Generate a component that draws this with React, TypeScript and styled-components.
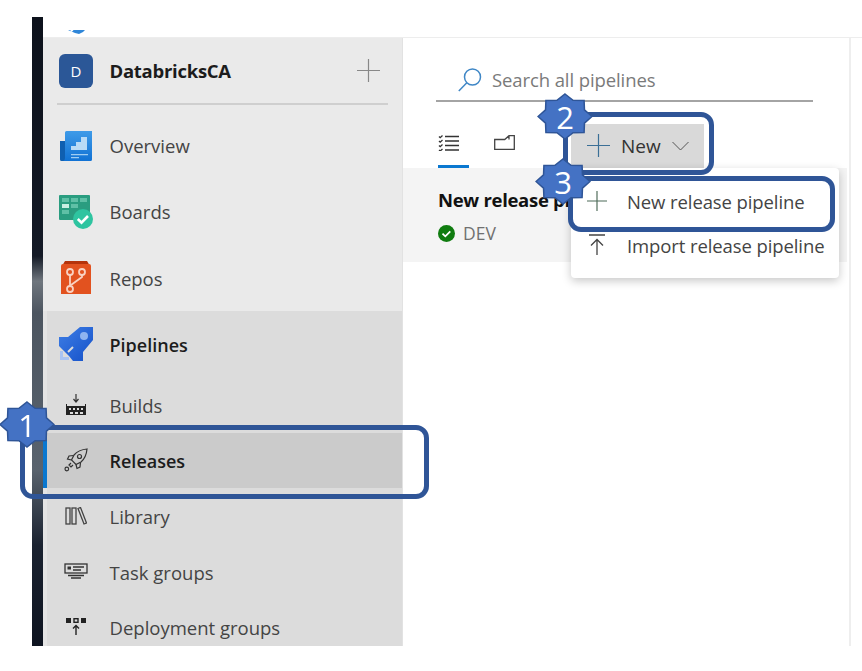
import * as React from 'react';
import styled, { createGlobalStyle } from 'styled-components';

const GlobalStyle = createGlobalStyle`
  html, body {
    margin: 0;
    padding: 0;
    background: #fff;
    font-family: "Open Sans", "Noto Sans", sans-serif;
  }
`;

const Page = styled.div`
  position: relative;
  width: 862px;
  height: 671px;
  overflow: hidden;
  padding: 17px 0 25px 32px;
  box-sizing: border-box;
  filter: blur(0.45px);
`;

const Shot = styled.div`
  display: flex;
  height: 629px;
  overflow: hidden;
`;

const Wallpaper = styled.div`
  width: 11px;
  flex: none;
  background: linear-gradient(
    180deg,
    #0d121c 0,
    #141a26 38%,
    #6f767e 42%,
    #4c5560 47%,
    #59636e 72%,
    #1a2230 84%,
    #0e1420 100%
  );
`;

const Window = styled.div`
  flex: 1;
  display: flex;
  flex-direction: column;
  min-width: 0;
`;

const TopBar = styled.div`
  height: 21px;
  flex: none;
  padding-left: 25px;
  border-bottom: 1px solid #ededed;
  box-sizing: border-box;
  overflow: hidden;
`;

const Body = styled.div`
  flex: 1;
  display: flex;
  min-height: 0;
`;

const Sidebar = styled.nav`
  width: 360px;
  flex: none;
  background: #eaeaea;
  border-right: 1px solid #e2e2e2;
  box-sizing: border-box;
  overflow: hidden;
`;

const ProjectHeader = styled.div`
  height: 67px;
  margin: 0 14px 8px 14px;
  padding: 0 8px 0 2px;
  display: flex;
  align-items: center;
  gap: 16.5px;
  border-bottom: 2px solid #cfcfcf;
  box-sizing: border-box;
`;

const Avatar = styled.div`
  width: 34px;
  height: 34px;
  border-radius: 6px;
  background: #2b5797;
  color: #fff;
  font-size: 15px;
  display: flex;
  align-items: center;
  justify-content: center;
`;

const ProjectName = styled.div`
  flex: 1;
  font-size: 18.5px;
  font-weight: 700;
  color: #1c1c1c;
  letter-spacing: -0.27px;
`;

const NavRow = styled.div<{ $selected?: boolean; $small?: boolean; $bold?: boolean }>`
  height: ${(p) => (p.$small ? '55.5px' : '66px')};
  display: flex;
  align-items: center;
  gap: 16.5px;
  padding-left: ${(p) => (p.$selected ? '12px' : '16px')};
  border-left: ${(p) => (p.$selected ? '4px solid #0a78d0' : 'none')};
  background: ${(p) => (p.$selected ? '#cbcbcb' : 'transparent')};
  font-size: ${(p) => (p.$bold ? '18px' : '18.5px')};
  font-weight: ${(p) => (p.$bold ? 600 : 400)};
  color: ${(p) => (p.$bold ? '#1c1c1c' : '#444')};
`;

const NavLabel = styled.span<{ $nudge?: 'up' | 'down' }>`
  padding-top: ${(p) => (p.$nudge === 'down' ? '2px' : '0')};
  padding-bottom: ${(p) => (p.$nudge === 'up' ? '2px' : '0')};
`;

const PipelinesGroup = styled.div`
  background: #dcdcdc;
  box-shadow: inset 4px 0 0 #e4e4e4;
`;

const IconSlot = styled.span`
  width: 34px;
  height: 34px;
  flex: none;
  display: flex;
  align-items: center;
  justify-content: center;
`;

const Main = styled.main`
  flex: 1;
  position: relative;
  min-width: 0;
  margin-right: 11px;
  border-right: 2px solid #eeeeee;
  background: #fff;
`;

const SearchBar = styled.div`
  margin: 0 36px 0 33px;
  height: 64px;
  padding: 0 0 8px 22px;
  display: flex;
  align-items: flex-end;
  gap: 10px;
  border-bottom: 2px solid #a4a4a4;
  box-sizing: border-box;
  color: #7a7a7a;
  font-size: 18.5px;
  letter-spacing: -0.1px;
`;

const Toolbar = styled.div`
  height: 66px;
  padding-left: 35px;
  display: flex;
  align-items: center;
  box-sizing: border-box;
`;

const Tab = styled.div<{ $active?: boolean }>`
  width: 31px;
  height: 46px;
  margin: 20px 25px 0 0;
  box-sizing: border-box;
  border-bottom: 3px solid ${(p) => (p.$active ? '#0a78d0' : 'transparent')};
  display: flex;
  padding-top: 13px;
`;

const NewButton = styled.div`
  width: 133px;
  height: 44px;
  margin: 21px 0 0 21px;
  padding-left: 16px;
  background: #d9d9d9;
  display: flex;
  align-items: center;
  box-sizing: border-box;
  font-size: 19px;
  color: #333;
`;

const NewLabel = styled.span`
  margin: 0 11px 0 11px;
`;

const ReleaseList = styled.div`
  margin-right: 2px;
  height: 94px;
  padding: 19px 0 0 35px;
  background: #f4f4f4;
  box-sizing: border-box;
`;

const ReleaseName = styled.div`
  font-size: 18.5px;
  font-weight: 700;
  color: #111;
  letter-spacing: -0.3px;
  white-space: nowrap;
`;

const ReleaseStage = styled.div`
  margin-top: 9px;
  display: flex;
  align-items: center;
  gap: 8px;
  font-size: 17.5px;
  color: #707070;
`;

const Menu = styled.div`
  position: absolute;
  left: 168px;
  top: 130px;
  width: 268px;
  height: 110px;
  padding-top: 11px;
  background: #fff;
  border-radius: 4px;
  box-shadow: 0 3px 10px rgba(0, 0, 0, 0.22);
  box-sizing: border-box;
`;

const MenuItem = styled.div`
  height: 44px;
  padding-left: 16px;
  display: flex;
  align-items: center;
  gap: 20px;
  font-size: 18.5px;
  letter-spacing: -0.1px;
  color: #444;
  white-space: nowrap;
`;

const MenuIconSlot = styled.span`
  width: 20px;
  flex: none;
  display: flex;
  justify-content: center;
`;

const Outline = styled.div<{ $x: number; $y: number; $w: number; $h: number }>`
  position: absolute;
  left: ${(p) => p.$x}px;
  top: ${(p) => p.$y}px;
  width: ${(p) => p.$w}px;
  height: ${(p) => p.$h}px;
  border: 5px solid #2f5597;
  border-radius: 13px;
  box-sizing: border-box;
`;

const Badge = styled.div<{ $x: number; $y: number }>`
  position: absolute;
  left: ${(p) => p.$x}px;
  top: ${(p) => p.$y}px;
  width: 56px;
  height: 47px;
  display: flex;
  align-items: center;
  justify-content: center;
  color: #fff;
  font-size: 31px;
  svg {
    position: absolute;
    inset: 0;
  }
  span {
    position: relative;
  }
`;

const starPoints = Array.from({ length: 16 }, (_, i) => {
  const a = (i * Math.PI) / 8 - Math.PI / 2;
  const r = i % 2 === 0 ? 1 : 0.78;
  return `${28 + 27 * r * Math.cos(a)},${23.5 + 22.5 * r * Math.sin(a)}`;
}).join(' ');

function Star({ n, x, y }: { n: number; x: number; y: number }) {
  return (
    <Badge $x={x} $y={y}>
      <svg width="56" height="47" viewBox="0 0 56 47">
        <polygon points={starPoints} fill="#4472c4" stroke="#2f5597" strokeWidth="1.500" />
      </svg>
      <span>{n}</span>
    </Badge>
  );
}

const OverviewIcon = () => (
  <svg width="34" height="32" viewBox="0 0 34 32">
    <defs>
      <linearGradient id="ov" x1="0" y1="0" x2="0" y2="1">
        <stop offset="0" stopColor="#3f9be8" />
        <stop offset="1" stopColor="#1172d4" />
      </linearGradient>
    </defs>
    <path d="M1 11h6v20H2.500A1.500 1.500 0 0 1 1 29.500z" fill="#0f5fb0" />
    <path d="M6 2.500A1.500 1.500 0 0 1 7.500 1H33v28.500a1.500 1.500 0 0 1-1.500 1.500H3.500C5 31 6 30 6 28z" fill="url(#ov)" />
    <path d="M12 16h5v-4h5V7h6v13H12z" fill="#b9dbf6" />
    <path d="M12 24h17v1.200H12zM12 27h8v1.200h-8z" fill="#9fcdf2" />
  </svg>
);

const BoardsIcon = () => (
  <svg width="34" height="34" viewBox="0 0 34 34">
    <rect x="0" y="0" width="31" height="25" rx="1" fill="#2a9d80" />
    <path d="M3 3h7v4H3zM12 3h7v4h-7zM21 3h7v4h-7zM12 9h7v4h-7zM3 15h7v4H3z" fill="#5fc0a6" />
    <path d="M3 9h7v4H3z" fill="#c8efe3" />
    <circle cx="24" cy="24" r="10" fill="#2ec4a0" />
    <path d="M18.800 24l3.700 3.600 6.500-6.600" fill="none" stroke="#fff" strokeWidth="2.600" />
  </svg>
);

const ReposIcon = () => (
  <svg width="32" height="34" viewBox="0 0 32 34">
    <path d="M5 0h22l3 5H2z" fill="#b5330b" />
    <path d="M3 3h26a2 2 0 0 1 2 2v28H1V5a2 2 0 0 1 2-2z" fill="#e2521f" />
    <g fill="none" stroke="#f9d2c2" strokeWidth="1.800">
      <circle cx="10" cy="11" r="3" />
      <circle cx="22" cy="11" r="3" />
      <circle cx="10" cy="28" r="3" />
      <path d="M10 14v11M22 14v2l-11 8" />
    </g>
  </svg>
);

const PipelinesIcon = () => (
  <svg width="34" height="34" viewBox="0 0 34 34">
    <defs>
      <linearGradient id="pl" x1="0" y1="0" x2="1" y2="1">
        <stop offset="0" stopColor="#3f7fe6" />
        <stop offset="1" stopColor="#1450c8" />
      </linearGradient>
    </defs>
    <path d="M0 10h9L21 0h13v13L24 25v9H14l-4-5-5-5-5-5z" fill="url(#pl)" />
    <circle cx="25" cy="9" r="4" fill="#8fb4f0" />
    <path d="M14 20L9 25" stroke="#dcdcdc" strokeWidth="2" />
    <path d="M1 24v9h9v-3H4v-6z" fill="#a9c4f2" />
  </svg>
);

const BuildsIcon = () => (
  <svg width="22" height="22" viewBox="0 0 22 22">
    <path d="M11 0v7M8.500 5l2.500 3 2.500-3" fill="none" stroke="#333" strokeWidth="1.200" />
    <path d="M1 10h1v2h18v-2h1v11H1z" fill="#222" />
    <path d="M4 14h2v2H4zM8 14h2v2H8zM12 14h2v2h-2zM16 14h2v2h-2zM5 18h3v2H5zM10 18h3v2h-3zM15 18h3v2h-3z" fill="#dcdcdc" />
  </svg>
);

const RocketIcon = () => (
  <svg width="24" height="24" viewBox="0 0 24 24" fill="none" stroke="#333" strokeWidth="1.200">
    <path d="M23 1c-6 .5-10 2.500-13 6l-2.500 5 4.500 4.500 5-2.500c3.500-3 5.500-7 6-13z" />
    <circle cx="15.500" cy="8.500" r="2" />
    <path d="M9.500 7.500L5 8 3.500 11l4 1M16.500 14.500L16 19l-3 1.500-1-4" />
    <path d="M7 15l-2 2 2 2 2-2" />
    <circle cx="2.800" cy="21" r="1.800" />
  </svg>
);

const LibraryIcon = () => (
  <svg width="22" height="18" viewBox="0 0 22 18" fill="none" stroke="#444" strokeWidth="1.300">
    <rect x="1" y="1" width="4" height="16" />
    <rect x="7" y="1" width="4" height="16" />
    <path d="M13 1.500l2.500-1 6 15.500-2.500 1z" />
  </svg>
);

const TaskGroupsIcon = () => (
  <svg width="24" height="16" viewBox="0 0 24 16" fill="none" stroke="#333" strokeWidth="1.300">
    <rect x="1" y="1" width="22" height="9" />
    <rect x="3.500" y="3.500" width="3.500" height="3" fill="#333" stroke="none" />
    <path d="M9 4h11M9 7h8M4 12.500h16M7 15h10" />
  </svg>
);

const DeploymentIcon = () => (
  <svg width="20" height="18" viewBox="0 0 20 18">
    <path d="M0 0h5v5H0zM15 0h5v5h-5z" fill="#222" />
    <rect x="8" y=".700" width="4" height="3.600" fill="none" stroke="#222" strokeWidth="1.400" />
    <path d="M10 17V8M7 10.500L10 7.500l3 3" fill="none" stroke="#222" strokeWidth="1.400" />
  </svg>
);

const PlusIcon = ({ size, color }: { size: number; color: string }) => (
  <svg width={size} height={size} viewBox="0 0 24 24" fill="none" stroke={color} strokeWidth={24 / size + 0.2}>
    <path d="M12 0v24M0 12h24" />
  </svg>
);

const SearchIcon = () => (
  <svg width="24" height="24" viewBox="0 0 24 24" fill="none" stroke="#3f87c6" strokeWidth="1.500">
    <circle cx="14.500" cy="9" r="8" />
    <path d="M8.800 14.800L0.800 23" />
  </svg>
);

const ListIcon = () => (
  <svg width="21" height="16" viewBox="0 0 21 16" fill="none" stroke="#333" strokeWidth="1.300">
    <path d="M7 1.500h14M7 6h14M7 10.500h14M7 15h14" />
    <path d="M1 1.500l1.200 1.200L4.500.500M1 6l1.200 1.200L4.500 5M1 10.500l1.200 1.200L4.500 9.500M1 15l1.200 1L4.500 14" />
  </svg>
);

const FolderIcon = () => (
  <svg width="21" height="15" viewBox="0 0 21 15" fill="none" stroke="#444" strokeWidth="1.300">
    <path d="M.700 14.300V4.500h10L15 .700h5.300v13.600zM15 .700v3.800" />
  </svg>
);

const Chevron = () => (
  <svg width="17" height="10" viewBox="0 0 17 10" fill="none" stroke="#555" strokeWidth="1">
    <path d="M.500 1l8 8 8-8" />
  </svg>
);

const StatusDot = () => (
  <svg width="17" height="17" viewBox="0 0 17 17">
    <circle cx="8.500" cy="8.500" r="8.500" fill="#107c10" />
    <path d="M4.500 8.700l2.800 2.600 5-5" fill="none" stroke="#fff" strokeWidth="1.800" />
  </svg>
);

const ImportIcon = () => (
  <svg width="18" height="22" viewBox="0 0 18 22" fill="none" stroke="#444" strokeWidth="1.300">
    <path d="M1 1h16M9 21V6M3 11.500L9 5.500l6 6" />
  </svg>
);

const LogoScrap = () => (
  <svg width="18" height="4" viewBox="0 0 18 4">
    <path d="M0 0h2l2 2 1.500-2H17l-2 2-4 2-4-1z" fill="#2f86d8" />
  </svg>
);

export default function App() {
  return (
    <>
      <GlobalStyle />
      <Page>
        <Shot>
          <Wallpaper />
          <Window>
            <TopBar>
              <LogoScrap />
            </TopBar>
            <Body>
              <Sidebar>
                <ProjectHeader>
                  <Avatar>D</Avatar>
                  <ProjectName>DatabricksCA</ProjectName>
                  <PlusIcon size={23} color="#888" />
                </ProjectHeader>
                <NavRow>
                  <IconSlot><OverviewIcon /></IconSlot>
                  <NavLabel $nudge="up">Overview</NavLabel>
                </NavRow>
                <NavRow>
                  <IconSlot><BoardsIcon /></IconSlot>
                  <NavLabel $nudge="up">Boards</NavLabel>
                </NavRow>
                <NavRow>
                  <IconSlot><ReposIcon /></IconSlot>
                  <NavLabel>Repos</NavLabel>
                </NavRow>
                <PipelinesGroup>
                  <NavRow $bold>
                    <IconSlot><PipelinesIcon /></IconSlot>
                    <NavLabel $nudge="down">Pipelines</NavLabel>
                  </NavRow>
                  <NavRow $small>
                    <IconSlot><BuildsIcon /></IconSlot>
                    <NavLabel $nudge="down">Builds</NavLabel>
                  </NavRow>
                  <NavRow $small $selected $bold>
                    <IconSlot><RocketIcon /></IconSlot>
                    <NavLabel $nudge="down">Releases</NavLabel>
                  </NavRow>
                  <NavRow $small>
                    <IconSlot><LibraryIcon /></IconSlot>
                    <NavLabel $nudge="down">Library</NavLabel>
                  </NavRow>
                  <NavRow $small>
                    <IconSlot><TaskGroupsIcon /></IconSlot>
                    <NavLabel $nudge="down">Task groups</NavLabel>
                  </NavRow>
                  <NavRow $small>
                    <IconSlot><DeploymentIcon /></IconSlot>
                    <NavLabel $nudge="down">Deployment groups</NavLabel>
                  </NavRow>
                </PipelinesGroup>
              </Sidebar>
              <Main>
                <SearchBar>
                  <SearchIcon />
                  Search all pipelines
                </SearchBar>
                <Toolbar>
                  <Tab $active><ListIcon /></Tab>
                  <Tab><FolderIcon /></Tab>
                  <NewButton>
                    <PlusIcon size={23} color="#3b6f96" />
                    <NewLabel>New</NewLabel>
                    <Chevron />
                  </NewButton>
                </Toolbar>
                <ReleaseList>
                  <ReleaseName>New release pipeline</ReleaseName>
                  <ReleaseStage>
                    <StatusDot />
                    DEV
                  </ReleaseStage>
                </ReleaseList>
                <Menu>
                  <MenuItem>
                    <MenuIconSlot><PlusIcon size={20} color="#4d6a58" /></MenuIconSlot>
                    New release pipeline
                  </MenuItem>
                  <MenuItem>
                    <MenuIconSlot><ImportIcon /></MenuIconSlot>
                    Import release pipeline
                  </MenuItem>
                </Menu>
              </Main>
            </Body>
          </Window>
        </Shot>
        <Outline $x={20} $y={425} $w={409} $h={74} />
        <Outline $x={563} $y={112} $w={151} $h={63} />
        <Outline $x={568} $y={176} $w={267} $h={56} />
        <Star n={1} x={-1} y={401} />
        <Star n={2} x={537} y={93} />
        <Star n={3} x={535} y={158} />
      </Page>
    </>
  );
}
